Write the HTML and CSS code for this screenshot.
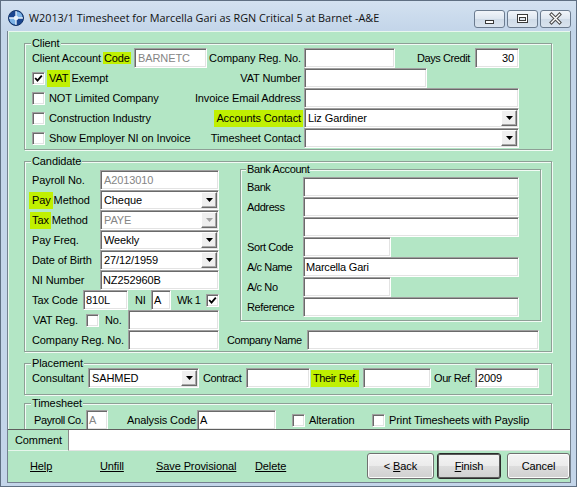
FILE: index.html
```html
<!DOCTYPE html>
<html>
<head>
<meta charset="utf-8">
<title>Timesheet</title>
<link rel="stylesheet" href="styles.css">
</head>
<body>
<div class="window">
  <header class="titlebar">
    <svg class="app-icon" width="16" height="16" viewBox="0 0 16 16">
      <circle cx="8" cy="8" r="7.5" fill="#1a4690"/>
      <path d="M8 1.2A6.8 6.8 0 0 1 14.8 8H8z" fill="#7db3e6"/>
      <path d="M8 14.8A6.8 6.8 0 0 1 1.2 8H8z" fill="#7db3e6"/>
      <path d="M8 1v14M1 8h14" stroke="#e8f2fb" stroke-width="1.3"/>
      <circle cx="8" cy="8" r="2.3" fill="#e8f2fb"/>
      <circle cx="8" cy="8" r="7.5" fill="none" stroke="#123366" stroke-width="1"/>
    </svg>
    <div class="title">W2013/1 Timesheet for Marcella Gari as RGN Critical 5 at Barnet -A&amp;E</div>
    <div class="caps">
      <div class="cap">
        <svg width="29" height="16" viewBox="0 0 29 16"><rect x="10.5" y="9.5" width="8" height="3" fill="#fff" stroke="#3a3a3a"/></svg>
      </div>
      <div class="cap">
        <svg width="29" height="16" viewBox="0 0 29 16"><rect x="9.5" y="3.5" width="10" height="8" fill="#fff" stroke="#3a3a3a"/><rect x="11.5" y="6.5" width="6" height="3" fill="#dfe6ee" stroke="#3a3a3a"/></svg>
      </div>
      <div class="cap">
        <svg width="29" height="16" viewBox="0 0 29 16"><path d="M10.5 3.5L18.5 11.5M18.5 3.5L10.5 11.5" stroke="#4a4a4a" stroke-width="3.4" stroke-linecap="square"/><path d="M10.5 3.5L18.5 11.5M18.5 3.5L10.5 11.5" stroke="#fff" stroke-width="1.4" stroke-linecap="square"/></svg>
      </div>
    </div>
  </header>

  <div class="client-area">
    <div class="panel">

      <section class="group g-client">
        <div class="legend">Client</div>
        <div class="client-grid">
          <div class="c1"><span class="lbl w102">Client Account <span class="hl hl-thin">Code</span></span><span class="field w73 grey">BARNETC</span></div>
          <div class="c2">Company Reg. No.</div>
          <div class="c3"><span class="field w91"></span><span class="lbl push narrow">Days Credit</span><span class="field w44 num">30</span></div>

          <div class="c1"><span class="cb"><svg width="9" height="9" viewBox="0 0 9 9"><path d="M1.2 4L3.5 6.6L7.8 1.6" fill="none" stroke="#000" stroke-width="1.8"/></svg></span><span class="cbl"><span class="hl">VAT</span> Exempt</span></div>
          <div class="c2">VAT Number</div>
          <div class="c3"><span class="field w123"></span></div>

          <div class="c1"><span class="cb"></span><span class="cbl">NOT Limited Company</span></div>
          <div class="c2">Invoice Email Address</div>
          <div class="c3"><span class="field w215"></span></div>

          <div class="c1"><span class="cb"></span><span class="cbl">Construction Industry</span></div>
          <div class="c2"><span class="hl">Accounts Contact</span></div>
          <div class="c3"><span class="field sel w215"><span class="val">Liz Gardiner</span><span class="dd"><svg width="7" height="4" viewBox="0 0 7 4"><path d="M0 0H7L3.5 4z"/></svg></span></span></div>

          <div class="c1"><span class="cb"></span><span class="cbl">Show Employer NI on Invoice</span></div>
          <div class="c2">Timesheet Contact</div>
          <div class="c3"><span class="field sel w215"><span class="val"></span><span class="dd"><svg width="7" height="4" viewBox="0 0 7 4"><path d="M0 0H7L3.5 4z"/></svg></span></span></div>
        </div>
      </section>

      <section class="group g-cand">
        <div class="legend">Candidate</div>
        <div class="cand-grid">
          <div class="cand-left">
            <div class="row"><span class="lbl w68">Payroll No.</span><span class="field w119 grey">A2013010</span></div>
            <div class="row"><span class="lbl w68"><span class="hl hl-l">Pay</span> Method</span><span class="field sel w119"><span class="val">Cheque</span><span class="dd"><svg width="7" height="4" viewBox="0 0 7 4"><path d="M0 0H7L3.5 4z"/></svg></span></span></div>
            <div class="row"><span class="lbl w68"><span class="hl">Tax</span> Method</span><span class="field sel w119 disabled"><span class="val">PAYE</span><span class="dd"><svg width="7" height="4" viewBox="0 0 7 4"><path d="M0 0H7L3.5 4z" fill="#a0a0a0"/></svg></span></span></div>
            <div class="row"><span class="lbl w68">Pay Freq.</span><span class="field sel w119"><span class="val">Weekly</span><span class="dd"><svg width="7" height="4" viewBox="0 0 7 4"><path d="M0 0H7L3.5 4z"/></svg></span></span></div>
            <div class="row"><span class="lbl w68">Date of Birth</span><span class="field sel w119"><span class="val">27/12/1959</span><span class="dd"><svg width="7" height="4" viewBox="0 0 7 4"><path d="M0 0H7L3.5 4z"/></svg></span></span></div>
            <div class="row"><span class="lbl w68">NI Number</span><span class="field w119 tight">NZ252960B</span></div>
            <div class="row"><span class="lbl w51">Tax Code</span><span class="field w45 tight">810L</span><span class="lbl w23 pl7">NI</span><span class="field w20 tight">A</span><span class="lbl w35 pl6 narrow">Wk 1</span><span class="cb"><svg width="9" height="9" viewBox="0 0 9 9"><path d="M1.2 4L3.5 6.6L7.8 1.6" fill="none" stroke="#000" stroke-width="1.8"/></svg></span></div>
            <div class="row"><span class="lbl w54 pl1">VAT Reg.</span><span class="cb"></span><span class="lbl w29 pl6">No.</span><span class="field w91"></span></div>
            <div class="row"><span class="lbl w96">Company Reg. No.</span><span class="field w91"></span></div>
          </div>
          <div class="cand-right">
            <section class="group g-bank">
              <div class="legend narrow">Bank Account</div>
              <div class="bank-grid narrow">
                <div class="row"><span class="lbl w56">Bank</span><span class="field w216"></span></div>
                <div class="row"><span class="lbl w56">Address</span><span class="field w216"></span></div>
                <div class="row"><span class="lbl w56"></span><span class="field w216"></span></div>
                <div class="row"><span class="lbl w56">Sort Code</span><span class="field w88"></span></div>
                <div class="row"><span class="lbl w56">A/c Name</span><span class="field w216 tight">Marcella Gari</span></div>
                <div class="row"><span class="lbl w56">A/c No</span><span class="field w88"></span></div>
                <div class="row"><span class="lbl w56">Reference</span><span class="field w216"></span></div>
              </div>
            </section>
            <div class="row cname narrow"><span class="lbl w80">Company Name</span><span class="field w232"></span></div>
          </div>
        </div>
      </section>

      <section class="group g-place">
        <div class="legend">Placement</div>
        <div class="row place-row">
          <span class="lbl w56">Consultant</span>
          <span class="field sel w111"><span class="val">SAHMED</span><span class="dd"><svg width="7" height="4" viewBox="0 0 7 4"><path d="M0 0H7L3.5 4z"/></svg></span></span>
          <span class="lbl w47 pl4 narrow">Contract</span>
          <span class="field w64"></span>
          <span class="lbl w53 pl3 narrow"><span class="hl">Their Ref.</span></span>
          <span class="field w68"></span>
          <span class="lbl w44 pl3 narrow">Our Ref.</span>
          <span class="field w64 tight">2009</span>
        </div>
      </section>

      <section class="group g-ts">
        <div class="legend">Timesheet</div>
        <div class="row ts-row">
          <span class="lbl w54 pl2 narrow">Payroll Co.</span>
          <span class="field w22 grey tight">A</span>
          <span class="lbl w89 pl19">Analysis Code</span>
          <span class="field w79 tight">A</span>
          <span class="cb ml16"></span>
          <span class="lbl w67 pl4">Alteration</span>
          <span class="cb"></span>
          <span class="lbl pl4">Print Timesheets with Payslip</span>
        </div>
      </section>

    </div>

    <div class="comment-bar">
      <div class="comment-tab">Comment</div>
      <div class="comment-input"></div>
    </div>

    <div class="action-bar">
      <div class="links">
        <span class="lnk w70">Help</span>
        <span class="lnk w56">Unfill</span>
        <span class="lnk w99">Save Provisional</span>
        <span class="lnk">Delete</span>
      </div>
      <div class="btns">
        <button class="btn w67">&lt; <u>B</u>ack</button>
        <button class="btn btn-default w64 ml3"><u>F</u>inish</button>
        <button class="btn w63 ml6">Cancel</button>
      </div>
    </div>
  </div>
</div>
</body>
</html>
```

FILE: styles.css
```css
* { box-sizing: border-box; margin: 0; padding: 0; }
html, body { width: 577px; height: 487px; overflow: hidden; }
body {
  background: #c6d7ea;
  font-family: "Liberation Sans", Arial, sans-serif;
  font-size: 11px;
  letter-spacing: -0.1px;
  color: #000;
}

.window {
  width: 577px;
  height: 487px;
  border: 1px solid #5f6f82;
  background: linear-gradient(#d3e1f0, #c3d5e9 30px, #c3d5e9);
  display: flex;
  flex-direction: column;
}

/* title bar */
.titlebar { height: 30px; flex: none; display: flex; align-items: flex-start; }
.app-icon { flex: none; margin: 9px 0 0 7px; }
.title {
  flex: 1;
  margin: 9px 0 0 5px;
  font-family: "Open Sans", "Noto Sans", sans-serif;
  font-size: 10.85px;
  letter-spacing: 0;
  line-height: 16px;
  white-space: nowrap;
  color: #111;
}
.caps { display: flex; gap: 2px; margin: 9px 5px 0 0; flex: none; }
.cap {
  width: 31px;
  height: 18px;
  border: 1px solid #6b7b8f;
  border-radius: 3px;
  background: linear-gradient(#f1f5fa, #dde6f0 50%, #cfdbe8 51%, #d9e3ee);
  display: flex;
}

/* client area */
.client-area {
  width: 564px;
  height: 452px;
  margin: 0 5px 3px 6px;
  border: 1px solid #74818f;
  border-top: 0;
  background: #b3e6c5;
  display: flex;
  flex-direction: column;
  flex: none;
}
.panel {
  height: 398px;
  flex: none;
  overflow: hidden;
  border-top: 1px solid #e8f7ee;
  border-left: 1px solid #e8f7ee;
  padding: 11px 18px 0 15px;
}

/* group boxes */
.group {
  border: 1px solid #8e9f96;
  box-shadow: inset 1px 1px 0 #f2fbf5, 1px 1px 0 #f2fbf5;
}
.legend {
  display: table;
  height: 13px;
  line-height: 13px;
  margin: -7px 0 0 6px;
  padding: 0 1px;
  background: #b3e6c5;
}

.row { display: flex; align-items: center; height: 20px; }
.lbl { flex: none; white-space: nowrap; line-height: 20px; }
.narrow { letter-spacing: -0.4px; }
.narrow .field { letter-spacing: -0.2px; }

/* client */
.client-grid {
  display: grid;
  grid-template-columns: 176px 96px 215px;
  grid-auto-rows: 20px;
  margin-top: -2px;
  padding: 0 0 1px 7px;
}
.c1, .c3 { display: flex; align-items: center; }
.c3 { align-items: flex-start; }
.c2 {
  display: flex;
  justify-content: flex-end;
  align-items: center;
  padding-right: 3px;
  white-space: nowrap;
}
.push { margin-left: auto; padding-right: 5px; }
.cbl { margin-left: 4px; white-space: nowrap; }

/* candidate */
.g-cand { margin-top: 11px; }
.cand-grid {
  display: grid;
  grid-template-columns: 187px 313px;
  column-gap: 8px;
  padding: 2px 0 1px 7px;
}
.g-bank { width: 301px; margin: -1px 0 0 13px; }
.g-bank .legend { margin-left: 5px; }
.bank-grid { padding: 1px 0 3px 6px; }
.cname { margin-top: 9px; }

/* placement */
.g-place { margin-top: 11px; }
.place-row { margin-top: -2px; padding-left: 7px; margin-bottom: 6px; }

/* timesheet */
.g-ts { margin-top: 8px; height: 70px; }
.ts-row { padding-left: 7px; }

/* fields */
.field {
  flex: none;
  display: flex;
  align-items: center;
  height: 20px;
  background: #fff;
  border: 1px solid;
  border-color: #a0a0a0 #fff #fff #a0a0a0;
  box-shadow: inset 1px 1px 0 #6a6a6a, inset -1px -1px 0 #e3e3e3;
  padding: 0 3px;
  white-space: nowrap;
  overflow: hidden;
  line-height: 18px;
}
.field.tight { padding-left: 2px; }
.field.num { justify-content: flex-end; padding-right: 4px; }
.grey, .disabled .val { color: #858585; }
.sel { padding-right: 1px; }
.sel .val { flex: 1; }
.dd {
  flex: none;
  width: 16px;
  height: 16px;
  display: flex;
  align-items: center;
  justify-content: center;
  background: #efefef;
  border: 1px solid;
  border-color: #fff #6a6a6a #6a6a6a #fff;
  box-shadow: inset -1px -1px 0 #a8a8a8;
}

.cb {
  flex: none;
  width: 13px;
  height: 13px;
  display: flex;
  align-items: center;
  justify-content: center;
  background: #fff;
  border: 1px solid;
  border-color: #a0a0a0 #fff #fff #a0a0a0;
  box-shadow: inset 1px 1px 0 #6a6a6a, inset -1px -1px 0 #e3e3e3;
}

/* highlights */
.hl { background: #c0f000; padding: 2px 2px 3px; margin: 0 -2px; }
.hl-thin { padding: 0 1px; margin: 0 -1px; }
.hl-l { padding-left: 3px; margin-left: -3px; }

/* widths */
.w20 { width: 20px; } .w22 { width: 22px; } .w23 { width: 23px; } .w29 { width: 29px; }
.w35 { width: 35px; } .w44 { width: 44px; } .w45 { width: 45px; } .w47 { width: 47px; }
.w51 { width: 51px; } .w53 { width: 53px; } .w54 { width: 54px; } .w56 { width: 56px; }
.w63 { width: 63px; } .w64 { width: 64px; } .w67 { width: 67px; } .w68 { width: 68px; }
.w70 { width: 70px; } .w73 { width: 73px; } .w79 { width: 79px; } .w80 { width: 80px; }
.w88 { width: 88px; } .w89 { width: 89px; } .w91 { width: 91px; } .w96 { width: 96px; }
.w99 { width: 99px; } .w102 { width: 102px; } .w111 { width: 111px; } .w119 { width: 119px; }
.w123 { width: 123px; } .w215 { width: 215px; } .w216 { width: 216px; } .w232 { width: 232px; }
.pl1 { padding-left: 1px; } .pl2 { padding-left: 2px; } .pl3 { padding-left: 3px; }
.pl4 { padding-left: 4px; } .pl6 { padding-left: 6px; } .pl7 { padding-left: 7px; }
.pl19 { padding-left: 19px; }
.ml3 { margin-left: 3px; } .ml6 { margin-left: 6px; } .ml16 { margin-left: 16px; }

/* comment bar */
.comment-bar {
  height: 22px;
  flex: none;
  display: flex;
  border-top: 1px solid #5e5e5e;
}
.comment-tab {
  width: 61px;
  flex: none;
  padding-left: 7px;
  line-height: 20px;
  border-right: 1px solid #8a8a8a;
  border-bottom: 1px solid #e6f6ec;
}
.comment-input { flex: 1; background: #fff; border-bottom: 1px solid #e4e4e4; }

/* action bar */
.action-bar {
  height: 31px;
  flex: none;
  display: flex;
  align-items: flex-start;
  padding-top: 2px;
}
.links { display: flex; padding-left: 22px; line-height: 26px; }
.lnk { text-decoration: underline; white-space: nowrap; }
.btns { margin-left: auto; display: flex; }
.btn {
  height: 26px;
  font: inherit;
  letter-spacing: -0.1px;
  color: #000;
  border: 1px solid #707070;
  border-radius: 3px;
  background: linear-gradient(#f4f4f4, #ebebeb 50%, #dddddd 51%, #d0d0d0);
  box-shadow: inset 0 0 0 1px #fcfcfc;
}
.btn u { text-decoration: underline; }
.btn-default {
  border-color: #2b2b2b;
  box-shadow: inset 0 0 0 1px #5a5a5a;
}
```
